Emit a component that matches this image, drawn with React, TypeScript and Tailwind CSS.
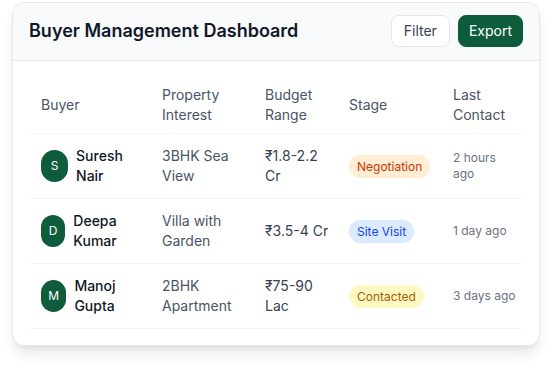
const buyers = [
  {
    initial: "S",
    name: "Suresh Nair",
    property: "3BHK Sea View",
    budget: "₹1.8-2.2 Cr",
    stage: "Negotiation",
    badge: "bg-orange-100 text-orange-700",
    last: "2 hours ago",
  },
  {
    initial: "D",
    name: "Deepa Kumar",
    property: "Villa with Garden",
    budget: "₹3.5-4 Cr",
    stage: "Site Visit",
    badge: "bg-blue-100 text-blue-700",
    last: "1 day ago",
  },
  {
    initial: "M",
    name: "Manoj Gupta",
    property: "2BHK Apartment",
    budget: "₹75-90 Lac",
    stage: "Contacted",
    badge: "bg-yellow-100 text-yellow-700",
    last: "3 days ago",
  },
];

export default function App() {
  return (
    <div
      className="w-[552px] h-[368px] bg-white pt-[2px] px-3"
      style={{ fontFamily: "Inter, 'Noto Sans', sans-serif" }}
    >
      <div className="bg-white border border-gray-200 rounded-xl shadow-lg overflow-hidden">
        <div className="flex items-center justify-between px-4 pt-3 pb-[13px] bg-gray-50 border-b border-gray-200">
          <h2 className="text-lg font-semibold text-gray-900">Buyer Management Dashboard</h2>
          <div className="flex items-center gap-2">
            <button className="px-3 py-[5px] text-sm text-gray-700 bg-white border border-gray-200 rounded-lg">
              Filter
            </button>
            <button className="px-[10px] py-[5px] text-sm text-white bg-[#0f5c3d] border border-[#0f5c3d] rounded-lg">
              Export
            </button>
          </div>
        </div>
        <div className="p-4">
          <table className="w-full table-fixed text-sm">
            <colgroup>
              <col className="w-[121px]" />
              <col className="w-[103px]" />
              <col className="w-[84px]" />
              <col className="w-[104px]" />
              <col className="w-[82px]" />
            </colgroup>
            <thead>
              <tr className="border-b border-gray-100 text-left text-gray-600">
                <th className="pl-3 pr-2 py-2 font-normal">Buyer</th>
                <th className="pl-3 pr-2 py-2 font-normal">Property Interest</th>
                <th className="pl-3 pr-2 py-2 font-normal">Budget Range</th>
                <th className="pl-3 pr-2 py-2 font-normal">Stage</th>
                <th className="pl-3 pr-1 py-2 font-normal">Last Contact</th>
              </tr>
            </thead>
            <tbody>
              {buyers.map((b) => (
                <tr key={b.name} className="border-b border-gray-100">
                  <td className="pl-3 pr-2 py-3">
                    <div className="flex items-center gap-2">
                      <div className="w-8 h-8 rounded-full bg-[#0f5c3d] text-white text-xs flex items-center justify-center">
                        {b.initial}
                      </div>
                      <span className="font-medium text-gray-900">{b.name}</span>
                    </div>
                  </td>
                  <td className="pl-3 pr-2 py-3 text-gray-600">{b.property}</td>
                  <td className="pl-3 pr-2 py-3 text-gray-700">{b.budget}</td>
                  <td className="pl-3 pr-2 py-3">
                    <span className={`px-2 py-1 rounded-full text-xs ${b.badge}`}>{b.stage}</span>
                  </td>
                  <td className="pl-3 pr-1 py-3 text-xs text-gray-500">{b.last}</td>
                </tr>
              ))}
            </tbody>
          </table>
        </div>
      </div>
    </div>
  );
}
